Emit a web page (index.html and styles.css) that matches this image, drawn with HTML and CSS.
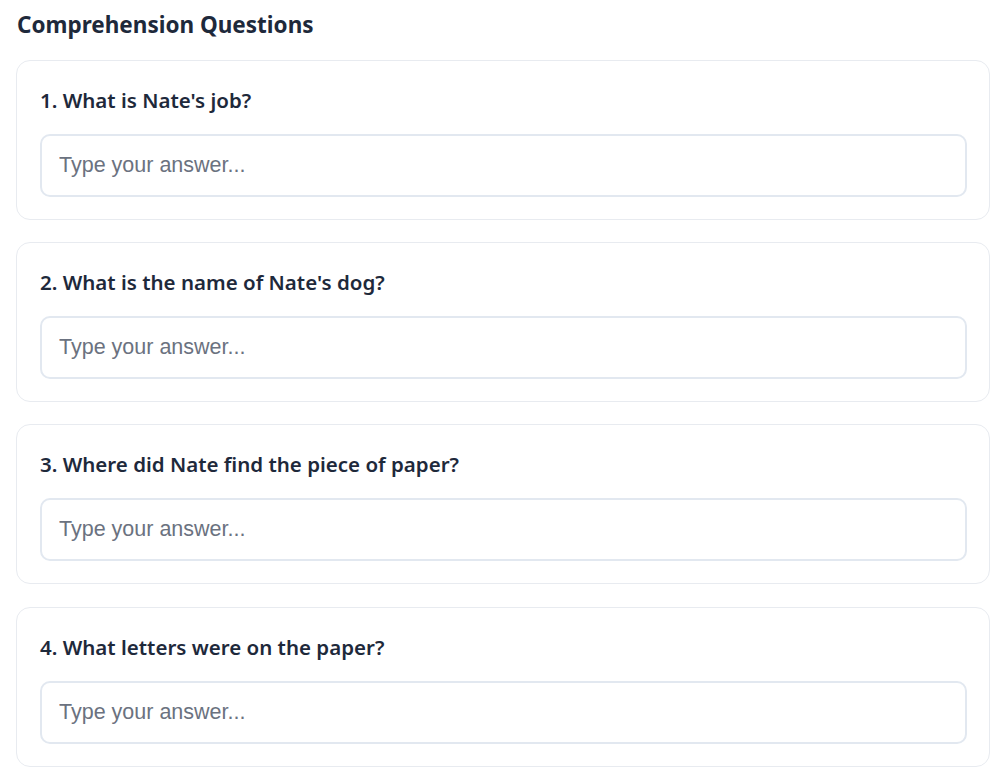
FILE: index.html
```html
<!DOCTYPE html>
<html lang="en">
<head>
<meta charset="utf-8">
<title>Comprehension Questions</title>
<link rel="stylesheet" href="styles.css">
</head>
<body>
<section class="quiz">
  <h2 class="quiz-title">Comprehension Questions</h2>
  <div class="card">
    <label class="question" for="q1">1. What is Nate's job?</label>
    <input class="answer" id="q1" type="text" placeholder="Type your answer...">
  </div>
  <div class="card">
    <label class="question" for="q2">2. What is the name of Nate's dog?</label>
    <input class="answer" id="q2" type="text" placeholder="Type your answer...">
  </div>
  <div class="card">
    <label class="question" for="q3">3. Where did Nate find the piece of paper?</label>
    <input class="answer" id="q3" type="text" placeholder="Type your answer...">
  </div>
  <div class="card">
    <label class="question" for="q4">4. What letters were on the paper?</label>
    <input class="answer" id="q4" type="text" placeholder="Type your answer...">
  </div>
</section>
</body>
</html>
```

FILE: styles.css
```css
* { box-sizing: border-box; }
html, body { margin: 0; background: #ffffff; }
body { padding: 0 15px 0 16px; font-family: "Noto Sans", "Open Sans", sans-serif; color: #1e293b; }
.quiz { display: flex; flex-direction: column; gap: 22.3px; }
.quiz-title {
  margin: 9px 0 -3.5px 1px;
  font-size: 22.5px;
  line-height: 32px;
  font-weight: 700;
  color: #1e293b;
}
.card {
  display: flex;
  flex-direction: column;
  height: 160px;
  padding: 24px 22px 22px 23px;
  border: 1px solid #e8ebf0;
  border-radius: 14px;
  background: #fff;
}
.question {
  font-size: 20.5px;
  line-height: 30px;
  font-weight: 600;
  color: #1e293b;
  margin-bottom: 19px;
}
.answer {
  height: 63px;
  width: 100%;
  padding: 0 17px;
  border: 2px solid #e2e8f0;
  border-radius: 10px;
  font-family: "Liberation Sans", Arial, sans-serif;
  font-size: 21.5px;
  color: #1e293b;
  background: #fff;
  outline: none;
}
.answer::placeholder { color: #6b7280; opacity: 1; }
```
